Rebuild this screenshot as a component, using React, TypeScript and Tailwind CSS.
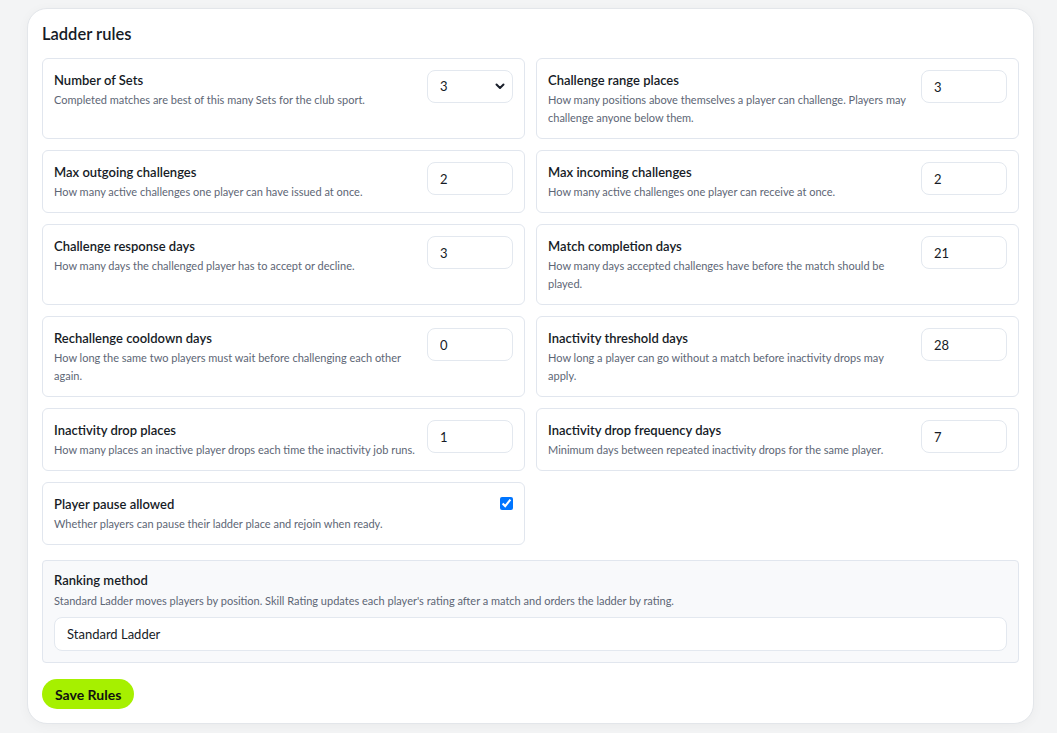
import React, { useState } from 'react';

type Rule = { label: string; help: string; value: string; kind?: 'select' | 'number' | 'checkbox' };

const rules: Rule[] = [
  { label: 'Number of Sets', help: 'Completed matches are best of this many Sets for the club sport.', value: '3', kind: 'select' },
  { label: 'Challenge range places', help: 'How many positions above themselves a player can challenge. Players may challenge anyone below them.', value: '3' },
  { label: 'Max outgoing challenges', help: 'How many active challenges one player can have issued at once.', value: '2' },
  { label: 'Max incoming challenges', help: 'How many active challenges one player can receive at once.', value: '2' },
  { label: 'Challenge response days', help: 'How many days the challenged player has to accept or decline.', value: '3' },
  { label: 'Match completion days', help: 'How many days accepted challenges have before the match should be played.', value: '21' },
  { label: 'Rechallenge cooldown days', help: 'How long the same two players must wait before challenging each other again.', value: '0' },
  { label: 'Inactivity threshold days', help: 'How long a player can go without a match before inactivity drops may apply.', value: '28' },
  { label: 'Inactivity drop places', help: 'How many places an inactive player drops each time the inactivity job runs.', value: '1' },
  { label: 'Inactivity drop frequency days', help: 'Minimum days between repeated inactivity drops for the same player.', value: '7' },
  { label: 'Player pause allowed', help: 'Whether players can pause their ladder place and rejoin when ready.', value: 'true', kind: 'checkbox' },
];

const RuleField: React.FC<{ rule: Rule }> = ({ rule }) => {
  const [val, setVal] = useState(rule.value);
  return (
    <div className="flex items-start gap-3 rounded-[6px] border border-[#e1e6ee] bg-white px-[11px] pt-3 pb-[11px]">
      <div className="min-w-0 flex-1">
        <div className="text-[13px] leading-[18px] font-semibold text-[#161b26]">{rule.label}</div>
        <p className="mt-[2px] text-[11px] leading-[18px] text-[#5d6675]">{rule.help}</p>
      </div>
      {rule.kind === 'checkbox' ? (
        <input type="checkbox" defaultChecked className="mt-[2px] h-[13px] w-[13px] accent-[#0075ff]" />
      ) : rule.kind === 'select' ? (
        <div className="relative -mt-px w-[86px] shrink-0">
          <select
            value={val}
            onChange={e => setVal(e.target.value)}
            className="h-[33px] w-full appearance-none rounded-[8px] border border-[#e3e8ef] bg-white pl-3 text-[13px] text-[#161b26] outline-none"
          >
            <option>1</option>
            <option>3</option>
            <option>5</option>
          </select>
          <svg className="pointer-events-none absolute right-[8px] top-[13px]" width="10" height="7" viewBox="0 0 10 7">
            <path d="M1.5 1.5 5 5l3.5-3.5" fill="none" stroke="#1a1f2b" strokeWidth="2" strokeLinecap="round" strokeLinejoin="round" />
          </svg>
        </div>
      ) : (
        <input
          value={val}
          onChange={e => setVal(e.target.value)}
          className="-mt-px h-[33px] w-[86px] shrink-0 rounded-[8px] border border-[#e3e8ef] bg-white px-3 text-[13px] text-[#161b26] outline-none"
        />
      )}
    </div>
  );
};

export default function App() {
  return (
    <div className="min-h-screen bg-[#f3f4f5] pt-2 pb-2 font-['Lato',sans-serif]">
      <div className="ml-[27px] w-[1007px] rounded-[20px] border border-[#e3e6ea] bg-white px-[14px] pt-[15px] pb-[14px] shadow-[0_2px_12px_rgba(0,0,0,0.04)]">
        <h2 className="text-[16.5px] leading-[20px] font-semibold text-[#161b26]">Ladder rules</h2>
        <div className="mt-[14px] grid grid-cols-2 gap-[11px]">
          {rules.map(r => (
            <RuleField key={r.label} rule={r} />
          ))}
        </div>
        <div className="mt-[15px] rounded-[4px] border border-[#e1e6ee] bg-[#f8f9fb] px-[11px] pt-[10px] pb-[11px]">
          <div className="text-[13px] leading-[18px] font-semibold text-[#161b26]">Ranking method</div>
          <p className="mt-[3px] text-[11px] leading-[17px] text-[#5d6675]">
            Standard Ladder moves players by position. Skill Rating updates each player's rating after a match and orders the ladder by rating.
          </p>
          <input
            defaultValue="Standard Ladder"
            className="mt-[8px] h-[34px] w-full rounded-[8px] border border-[#e3e8ef] bg-white px-3 text-[13px] text-[#161b26] outline-none"
          />
        </div>
        <button className="mt-[16px] h-[30px] rounded-full bg-[#a6f000] px-[13px] text-[14px] font-bold text-[#111]">Save Rules</button>
      </div>
    </div>
  );
}
